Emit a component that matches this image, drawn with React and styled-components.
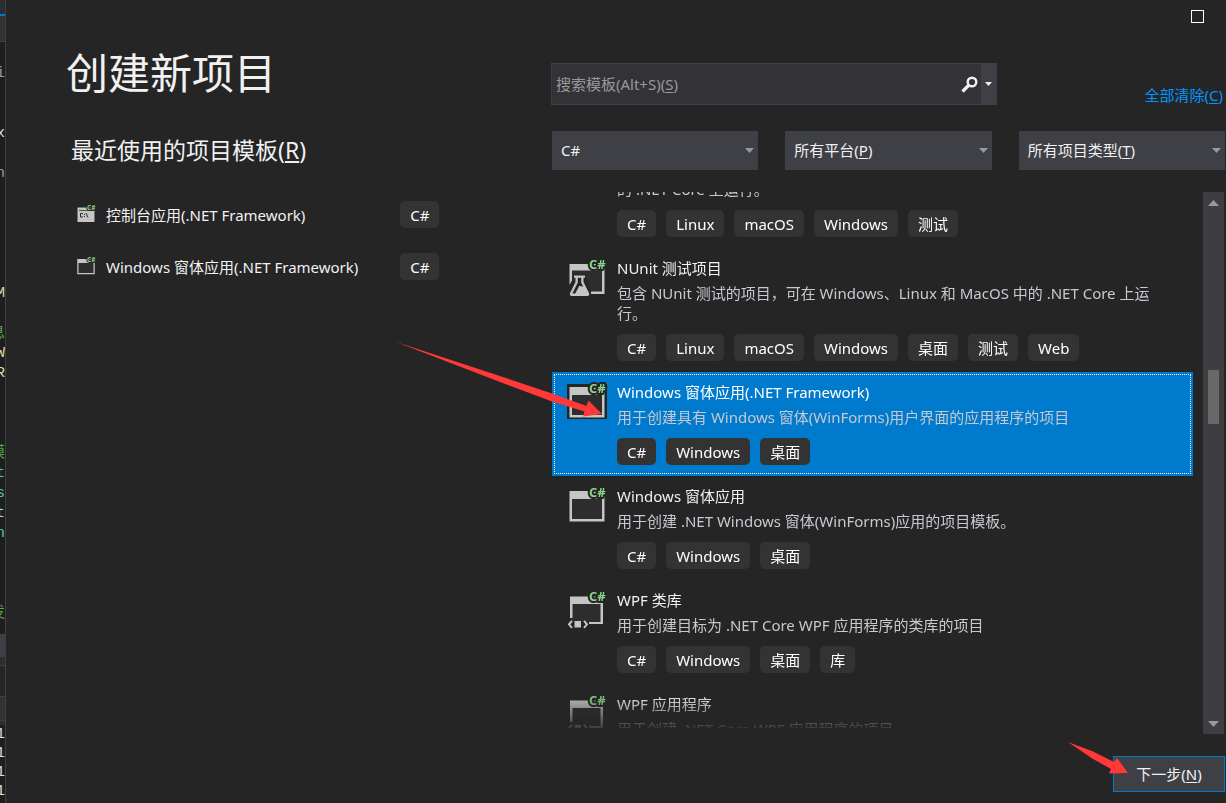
import React, { useLayoutEffect, useRef, useState } from "react";
import styled, { createGlobalStyle, css } from "styled-components";

const GlobalStyle = createGlobalStyle`
  * {
    box-sizing: border-box;
  }

  body {
    margin: 0;
    background: #252526;
  }

  body, button, input, select {
    font-family: "Noto Sans", "Noto Sans CJK SC", sans-serif;
    font-size: 15px;
    line-height: 20px;
    color: #f1f1f1;
  }

  h1, h2, h3, p, ul {
    margin: 0;
    padding: 0;
    font-weight: 400;
  }

  u {
    text-underline-offset: 2px;
  }
`;

const Page = styled.div`
  position: relative;
  display: flex;
  height: 100vh;
  min-height: 600px;
  overflow: hidden;
`;

/* slice of the editor that stays visible behind the dialog */

const EditorStrip = styled.div`
  display: flex;
  flex-direction: column;
  flex: none;
  width: 6px;
  overflow: hidden;
  background: #1e1e1e;
  border-right: 1px solid #3f3f46;
`;

const StripBand = styled.div`
  flex: none;
  height: ${(p) => p.$h}px;
  background: ${(p) => p.$bg || "transparent"};
`;

const CodeLine = styled.div`
  display: flex;
  justify-content: flex-end;
  flex: none;
  height: ${(p) => p.$h || 20}px;
  line-height: ${(p) => p.$h || 20}px;
  font-family: "Liberation Mono", "Noto Sans CJK SC", monospace;
  font-size: 15px;
  color: ${(p) => p.$color || "#dcdcdc"};
`;

const Dialog = styled.main`
  display: grid;
  grid-template-columns: 545fr 674fr;
  flex: 1;
  min-width: 0;
  padding-right: 1px;
`;

const Recent = styled.section`
  padding: 45px 0 0 60px;

  h1 {
    font-size: 42px;
    line-height: 56px;
  }

  h2 {
    margin: 33px 0 35px 5px;
    font-size: 23px;
    line-height: 32px;
  }
`;

const RecentList = styled.ul`
  display: flex;
  flex-direction: column;
  gap: 25px;
  width: 77%;
  padding-left: 10px;
  list-style: none;
`;

const RecentRow = styled.li`
  display: flex;
  align-items: center;
  gap: 10px;
  white-space: nowrap;

  span:first-of-type {
    flex: 1;
  }
`;

const Tag = styled.span`
  flex: none;
  height: 27px;
  padding: 0 10px;
  line-height: 28px;
  border-radius: 5px;
  background: #333334;
  color: #fff;
`;

const Templates = styled.section`
  display: flex;
  flex-direction: column;
  min-width: 0;
  min-height: 0;
  height: 100vh;
  padding-bottom: 11px;
`;

const TitleBar = styled.div`
  display: flex;
  align-items: flex-start;
  justify-content: flex-end;
  flex: none;
  height: 63px;
  padding: 10px 21px 0 0;
`;

const MaximizeButton = styled.button`
  width: 13px;
  height: 13px;
  padding: 0;
  background: transparent;
  border: 1px solid #fff;
`;

const SearchRow = styled.div`
  display: flex;
  align-items: flex-end;
  justify-content: space-between;
`;

const SearchBox = styled.div`
  position: relative;
  display: flex;
  width: 446px;
  height: 42px;
  background: #333337;
  border: 1px solid #3f3f46;

  input {
    flex: 1;
    min-width: 0;
    padding: 0 5px;
    background: transparent;
    border: 0;
    outline: none;
  }

  label {
    position: absolute;
    left: 4px;
    top: 10px;
    color: #999;
    pointer-events: none;
  }

  button {
    display: flex;
    align-items: center;
    justify-content: center;
    padding: 0;
    border: 0;
    background: transparent;
  }

  .go {
    width: 24px;
  }

  .more {
    width: 15px;
    background: #3f3f46;
  }
`;

const ClearLink = styled.a`
  padding-right: 2px;
  color: #0097fb;
  text-decoration: none;
`;

const Filters = styled.div`
  display: flex;
  gap: 27px;
  margin: 26px 0 22px;
  padding-left: 1px;
`;

const FilterBox = styled.div`
  position: relative;
  display: flex;
  align-items: center;
  justify-content: space-between;
  flex: 1;
  height: 39px;
  padding: 0 4px 1px 9px;
  background: #3f3f46;

  select {
    position: absolute;
    inset: 0;
    width: 100%;
    opacity: 0;
  }
`;

const ListArea = styled.div`
  display: flex;
  flex: 1;
  gap: 10px;
  min-height: 0;
  padding: 0 1px;
`;

const TemplateList = styled.ul`
  flex: 1;
  margin-bottom: 6px;
  list-style: none;
  overflow-y: auto;
  scrollbar-width: none;
  mask-image: linear-gradient(to top, rgba(0, 0, 0, 0.15), #000 34px);
`;

const TemplateItem = styled.li`
  display: flex;
  gap: 10px;
  padding: 10px 20px 11px 15px;
  cursor: default;

  h3 {
    margin-bottom: 5px;
    font-size: 15px;
    color: ${(p) => (p.$selected ? "#fff" : "#f1f1f1")};
  }

  p {
    margin-bottom: 11px;
    color: #c8c8d0;
  }

  ${(p) =>
    p.$selected &&
    css`
      background: #007acc;
      outline: 1px dotted #fff;
      outline-offset: -3px;
    `}
`;

const IconSlot = styled.div`
  flex: none;
  width: 40px;
  padding-top: 1px;
`;

const Tags = styled.div`
  display: flex;
  gap: 10px;
`;

const ScrollBar = styled.div`
  display: flex;
  flex-direction: column;
  align-items: center;
  width: 21px;
  background: #3e3e42;

  button {
    display: flex;
    align-items: center;
    justify-content: center;
    width: 100%;
    height: 21px;
    padding: 0;
    border: 0;
    background: transparent;
  }
`;

const ScrollTrack = styled.div`
  display: flex;
  flex-direction: column;
  flex: 1;

  &::before {
    content: "";
    flex: 157;
  }

  &::after {
    content: "";
    flex: 289;
  }
`;

const ScrollThumb = styled.div`
  flex: 54;
  width: 11px;
  background: #686868;
`;

const Footer = styled.div`
  position: relative;
  display: flex;
  justify-content: flex-end;
  margin-top: 22px;
`;

const NextButton = styled.button`
  width: 112px;
  height: 36px;
  padding: 0;
  background: #3f3f46;
  border: 1px solid #007acc;
`;

const ListArrow = styled.svg`
  position: absolute;
  left: 396px;
  top: 342px;
  pointer-events: none;
`;

const NextArrow = styled.svg`
  position: absolute;
  right: 97px;
  top: -14px;
  pointer-events: none;
`;

const Triangle = ({ up, w = 9, h = 5, fill = "#999" }) => (
  <svg width={w} height={h} viewBox="0 0 10 5" preserveAspectRatio="none">
    <path d={up ? "M0 5L5 0l5 5z" : "M0 0h10L5 5z"} fill={fill} />
  </svg>
);

const CSharpBadge = () => (
  <text
    x="22"
    y="9.5"
    fontFamily="Open Sans, sans-serif"
    fontSize="13"
    fontWeight="700"
    fill="#8ad28a"
    stroke="#252526"
    strokeWidth="4"
    strokeLinejoin="round"
    paintOrder="stroke"
  >
    C#
  </text>
);

const TemplateIcon = ({ kind, size = 40, selected }) => (
  <svg width={size} height={size} viewBox="0 0 40 40" overflow="visible">
    {selected && <path d="M0 1h40v35H0z" fill="#252526" />}
    {kind === "form" && (
      <>
        <path d="M2.5 4h35v30.5h-35z" fill="#c5c5c5" />
        <path d="M5 12h30v20H5z" fill="#2d2d30" />
      </>
    )}
    {kind === "console" && (
      <>
        <path d="M3 5h34v29H3z" fill="#c5c5c5" />
        <path d="M6 10h28v1.5H6z" fill="#2d2d30" />
        <path
          d="M14 17h-5v7h5M17 18v2M17 22v2M20 16l4 9"
          fill="none"
          stroke="#2d2d30"
          strokeWidth="2"
        />
      </>
    )}
    {kind === "test" && (
      <>
        <path d="M5 11.5h30v21H5z" fill="#2d2d30" />
        <path d="M2.5 5h35v30H24v-2.5h11v-21H5v10l-2.5 4.5z" fill="#c5c5c5" />
        <path d="M6 15.5h13v4l5 12v7H1v-7l5-12z" fill="#252526" />
        <path
          d="M7 16.5h11v2.3h-1.5V23l5.6 11.2q.8 2.6-2 2.8H5q-2.8-.2-2-2.8L8.5 23v-4.2H7z"
          fill="#c5c5c5"
        />
        <path d="M10.8 18.8h3.4v5l2 4-3.8-1-4.200 7.700H5.400l5.400-11z" fill="#252526" />
      </>
    )}
    {kind === "wpf" && (
      <>
        <path d="M5 13h28.5v18H5z" fill="#2d2d30" />
        <path d="M3 5.5h33V33H22v-2h11.5V13H5.500v14H3z" fill="#c5c5c5" />
        <path d="M7.500 30h6.500v6.500H7.500z" fill="#c5c5c5" />
        <path
          d="M5 29.800L2 33.300l3 3.500M17 29.800l3 3.500-3 3.500"
          fill="none"
          stroke="#c5c5c5"
          strokeWidth="2"
        />
      </>
    )}
    <CSharpBadge />
  </svg>
);

const codeLines = {
  0: ["i", "#9b9b9b"],
  3: ["x", "#dcdcdc"],
  5: ["n", "#9b9b9b"],
  11: ["M", "#dcdcaa"],
  13: ["息", "#57a64a"],
  14: ["W", "#dcdcaa"],
  15: ["R", "#dcdcaa"],
  19: ["模", "#57a64a"],
  20: ["t", "#4ec9b0"],
  21: ["s", "#4ec9b0"],
  22: ["t", "#9cdcfe"],
  23: ["n", "#4ec9b0"],
  27: ["发", "#57a64a"],
};

const recent = [
  { kind: "console", name: "控制台应用(.NET Framework)" },
  { kind: "form", name: "Windows 窗体应用(.NET Framework)" },
];

const filters = [
  { id: "language", label: "语言", text: "C#" },
  { id: "platform", label: "平台", text: "所有平台", accessKey: "P" },
  { id: "type", label: "项目类型", text: "所有项目类型", accessKey: "T" },
];

const templates = [
  {
    desc: "的 .NET Core 上运行。",
    tags: ["C#", "Linux", "macOS", "Windows", "测试"],
  },
  {
    kind: "test",
    name: "NUnit 测试项目",
    desc: "包含 NUnit 测试的项目，可在 Windows、Linux 和 MacOS 中的 .NET Core 上运行。",
    tags: ["C#", "Linux", "macOS", "Windows", "桌面", "测试", "Web"],
  },
  {
    kind: "form",
    name: "Windows 窗体应用(.NET Framework)",
    desc: "用于创建具有 Windows 窗体(WinForms)用户界面的应用程序的项目",
    tags: ["C#", "Windows", "桌面"],
  },
  {
    kind: "form",
    name: "Windows 窗体应用",
    desc: "用于创建 .NET Windows 窗体(WinForms)应用的项目模板。",
    tags: ["C#", "Windows", "桌面"],
  },
  {
    kind: "wpf",
    name: "WPF 类库",
    desc: "用于创建目标为 .NET Core WPF 应用程序的类库的项目",
    tags: ["C#", "Windows", "桌面", "库"],
  },
  {
    kind: "wpf",
    name: "WPF 应用程序",
    desc: "用于创建 .NET Core WPF 应用程序的项目",
    tags: ["C#", "Windows", "桌面"],
  },
];

function Filter({ id, label, text, accessKey }) {
  return (
    <FilterBox>
      <span aria-hidden="true">
        {text}
        {accessKey && <>(<u>{accessKey}</u>)</>}
      </span>
      <Triangle />
      <select id={id} aria-label={label} defaultValue={text}>
        <option>{text}</option>
      </select>
    </FilterBox>
  );
}

function App() {
  const [selected, setSelected] = useState(2);
  const [query, setQuery] = useState("");
  const listRef = useRef(null);

  // the list opens scrolled part way into the first entry
  useLayoutEffect(() => {
    listRef.current.scrollTop = 23;
  }, []);

  const scroll = (delta) => {
    listRef.current.scrollTop += delta;
  };

  return (
    <Page>
      <GlobalStyle />
      <EditorStrip aria-hidden="true">
        <StripBand $h={14} $bg="#2d2d30" />
        <StripBand $h={2} $bg="#007acc" />
        <StripBand $h={25} $bg="#333337" />
        <StripBand $h={1} $bg="#3f3f46" />
        <StripBand $h={22} />
        {Array.from({ length: 28 }, (_, i) => (
          <CodeLine key={i} $color={codeLines[i]?.[1]}>
            {codeLines[i]?.[0]}
          </CodeLine>
        ))}
        <StripBand $h={10} />
        <StripBand $h={23} $bg="#3f3f46" />
        <StripBand $h={8} $bg="#2d2d30" />
        <StripBand $h={1} $bg="#3f3f46" />
        <StripBand $h={30} $bg="#252526" />
        <StripBand $h={1} $bg="#3f3f46" />
        <StripBand $h={23} $bg="#333337" />
        <StripBand $h={1} $bg="#3f3f46" />
        <StripBand $h={4} $bg="#2d2d30" />
        {[1, 2, 3, 4].map((n) => (
          <CodeLine key={n} $h={19}>1</CodeLine>
        ))}
      </EditorStrip>

      <Dialog>
        <Recent>
          <h1>创建新项目</h1>
          <h2>最近使用的项目模板(<u>R</u>)</h2>
          <RecentList>
            {recent.map((item) => (
              <RecentRow key={item.name}>
                <TemplateIcon kind={item.kind} size={20} />
                <span>{item.name}</span>
                <Tag>C#</Tag>
              </RecentRow>
            ))}
          </RecentList>
        </Recent>

        <Templates>
          <TitleBar>
            <MaximizeButton aria-label="最大化" />
          </TitleBar>
          <SearchRow>
            <SearchBox>
              <input
                id="search"
                type="text"
                value={query}
                onChange={(e) => setQuery(e.target.value)}
              />
              {!query && <label htmlFor="search">搜索模板(Alt+S)(<u>S</u>)</label>}
              <button className="go" aria-label="搜索">
                <svg width="17" height="17" viewBox="0 0 17 17" fill="none" stroke="#f1f1f1">
                  <circle cx="11" cy="6" r="4.300" strokeWidth="2.400" />
                  <path d="M7.500 9.500L1.500 15.500" strokeWidth="3.200" />
                </svg>
              </button>
              <button className="more" aria-label="搜索选项">
                <Triangle w={7} h={4} fill="#f1f1f1" />
              </button>
            </SearchBox>
            <ClearLink href="#">全部清除(<u>C</u>)</ClearLink>
          </SearchRow>
          <Filters>
            {filters.map((f) => (
              <Filter key={f.id} {...f} />
            ))}
          </Filters>
          <ListArea>
            <TemplateList ref={listRef}>
              {templates.map((t, i) => (
                <TemplateItem key={i} $selected={i === selected} onClick={() => setSelected(i)}>
                  <IconSlot>
                    {t.kind && <TemplateIcon kind={t.kind} selected={i === selected} />}
                  </IconSlot>
                  <div>
                    {t.name && <h3>{t.name}</h3>}
                    <p>{t.desc}</p>
                    <Tags>
                      {t.tags.map((tag) => (
                        <Tag key={tag}>{tag}</Tag>
                      ))}
                    </Tags>
                  </div>
                </TemplateItem>
              ))}
            </TemplateList>
            <ScrollBar>
              <button aria-label="向上滚动" onClick={() => scroll(-52)}>
                <Triangle up w={11} h={6} />
              </button>
              <ScrollTrack>
                <ScrollThumb />
              </ScrollTrack>
              <button aria-label="向下滚动" onClick={() => scroll(52)}>
                <Triangle w={11} h={6} />
              </button>
            </ScrollBar>
          </ListArea>
          <Footer>
            <NextButton>下一步(<u>N</u>)</NextButton>
            <NextArrow width="60" height="32" viewBox="0 0 60 32">
              <path d="M0 0L25 9.500 46 20l3-4 11 15-19 .5 2-4.500L25 17z" fill="#ff3838" />
            </NextArrow>
          </Footer>
        </Templates>
      </Dialog>

      <ListArrow width="207" height="75" viewBox="0 0 207 75">
        <path
          d="M0 0L104 34l52 17.500L190.500 64l2-5.500L206 72l-19 2.500 1.500-5L156 59.500l-52-19.500z"
          fill="#ff3838"
        />
      </ListArrow>
    </Page>
  );
}

export default App;
